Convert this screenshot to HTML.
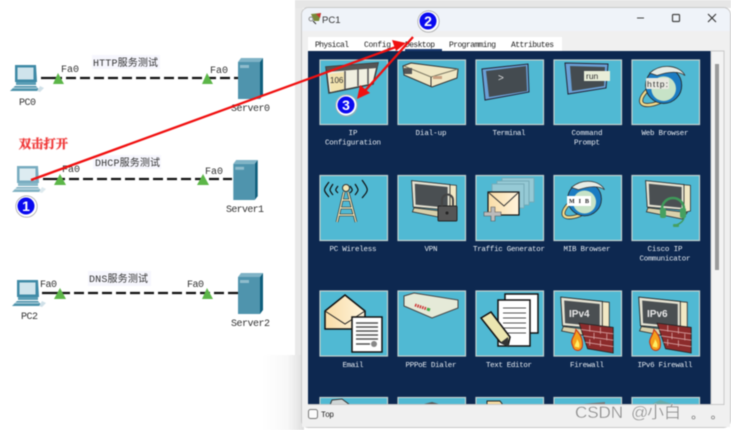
<!DOCTYPE html>
<html><head><meta charset="utf-8">
<style>
html,body{margin:0;padding:0;width:731px;height:430px;overflow:hidden;background:#fff}
svg{display:block;filter:blur(.45px)}
.m{font-family:"Liberation Mono","Noto Sans CJK SC",monospace;font-size:8px;fill:#222}
.l{font-family:"Liberation Mono",monospace;font-size:7.5px;fill:#e6ecf2;text-anchor:middle}
.n{font-family:"Liberation Mono","Noto Sans CJK SC",monospace;font-size:10px;fill:#333}
.c{font-family:"Liberation Sans",sans-serif;font-size:14px;font-weight:bold;fill:#fff;text-anchor:middle}
.w{font-family:"Liberation Sans","Noto Sans CJK SC",sans-serif;font-size:17px;fill:#8a8a8a;stroke:#fff;stroke-width:.25}
</style></head><body>
<svg width="731" height="430" viewBox="0 0 731 430" xmlns="http://www.w3.org/2000/svg">
<defs>
<linearGradient id="sh" x1="0" x2="1" y1="0" y2="0"><stop offset="0" stop-color="#fff"/><stop offset=".6" stop-color="#f8f8f8"/><stop offset="1" stop-color="#dedede"/></linearGradient>
<linearGradient id="env" x1="0" x2="1"><stop offset="0" stop-color="#f9dca6"/><stop offset="1" stop-color="#fff4dc"/></linearGradient>
<symbol id="pc" viewBox="0 0 36 30" overflow="visible">
<path d="M5 1H26L27 18H5Z" fill="#3f8aa6"/><rect x="7.500" y="3.500" width="16" height="12" fill="#cfe4ec"/>
<path d="M6 18H26V21H6Z" fill="#5a9db5"/><path d="M5 22H26L30 27H0Z" fill="#4e93ab"/><path d="M3 24H27" stroke="#bcd7e2"/>
<path d="M30 22L34 24L30 28L27 27Z" fill="#cfe0e8"/>
</symbol>
<symbol id="srv" viewBox="0 0 26 42" overflow="visible">
<path d="M3 0H25L22 4H0Z" fill="#7fb3c6"/><path d="M22 4L25 0V37L22 41Z" fill="#0f5f7d"/><rect x="0" y="4" width="22" height="37" fill="#4f94ad"/><rect x="2" y="7" width="9" height="3" fill="#8fbccc"/>
</symbol>
<symbol id="mon" viewBox="0 0 60 50" overflow="visible">
<path d="M48 7L58 8V40L48 42Z" fill="#f1e8c4" stroke="#333"/>
<path d="M5 36L3 41L48 50L54 42Z" fill="#d9d1ab" stroke="#333"/>
<path d="M2 2L50 7V39L4 35Z" fill="#e4e2d2" stroke="#222"/>
<path d="M6 6L47 10V36L7 32Z" fill="#4a4f52"/>
</symbol>
<symbol id="wall" viewBox="0 0 36 30" overflow="visible">
<path d="M4 2L36 6V30L12 26Z" fill="#8c2b2b" stroke="#222" stroke-width=".8"/><path d="M6 8L36 12M8 14L36 18M10 20L36 24" stroke="#d6a0a0" stroke-width=".8"/><path d="M14 4V10M24 6V12M18 11V17M30 12V18M14 17V23M24 18V24" stroke="#d6a0a0" stroke-width=".8"/>
<path d="M-2 23C-5 17 0 15 1 8C5 12 8 17 7 24C6 29-1 29-2 23Z" fill="#f4a01c" stroke="#c6341a"/><path d="M0 24C0 21 2 20 2 17C4 20 5 22 4 25Z" fill="#ffee66"/>
</symbol>
<symbol id="globe" viewBox="0 0 60 56" overflow="visible">
<path d="M12 32C2 42 2 50 12 50C20 50 30 46 38 40" fill="none" stroke="#333" stroke-width="5"/><path d="M12 32C2 42 2 50 12 50C20 50 30 46 38 40" fill="none" stroke="#efd98a" stroke-width="3"/>
<circle cx="32" cy="26" r="22" fill="#1b7cc2" stroke="#222"/><circle cx="32" cy="30" r="15" fill="#c7e3c7"/><path d="M15 11C30-2 52 2 58 14C50 8 36 10 24 14Z" fill="#e6ece6" stroke="#333"/>
</symbol>
</defs>

<rect width="731" height="430" fill="#fff"/>
<rect x="295" y="0" width="8" height="355" fill="#e9e9e9"/>
<rect x="262" y="355" width="42" height="75" fill="url(#sh)"/>
<rect x="295" y="0" width="436" height="8" fill="#e6e6e6"/>

<!-- Left topology -->
<rect x="92" y="55" width="68" height="14" fill="#f6f6fd"/><rect x="93" y="155" width="68" height="14" fill="#f6f6fd"/><rect x="88" y="271" width="63" height="15" fill="#f6f6fd"/>
<g stroke="#111" stroke-width="2.200" fill="none">
<path d="M41 78H52"/><path d="M52 78H238" stroke-dasharray="10 4"/>
<path d="M43 179H55"/><path d="M55 179H232" stroke-dasharray="10 4"/>
<path d="M42 293H60"/><path d="M60 293H238" stroke-dasharray="10 4"/>
</g>
<g fill="#5cb648">
<path d="M58 73L64 84H53Z"/><path d="M207 73L213 84H202Z"/>
<path d="M60 174L66 185H54Z"/><path d="M203 174L209 185H197Z"/>
<path d="M60 288L66 299H54Z"/><path d="M207 288L213 299H202Z"/>
</g>
<use href="#pc" x="10" y="64" width="36" height="30"/>
<g opacity=".7"><use href="#pc" x="12" y="165" width="36" height="30"/></g>
<use href="#pc" x="12" y="279" width="36" height="30"/>
<use href="#srv" x="238" y="58" width="26" height="42"/>
<use href="#srv" x="233" y="160" width="26" height="41"/>
<use href="#srv" x="238" y="273" width="26" height="42"/>

<g class="n">
<text x="61" y="72" class="n" textLength="18">Fa0</text><text x="210" y="73" class="n" textLength="18">Fa0</text>
<text x="62" y="172" class="n" textLength="18">Fa0</text><text x="205" y="174" class="n" textLength="18">Fa0</text>
<text x="40" y="287" class="n" textLength="17">Fa0</text><text x="187" y="287" class="n" textLength="17">Fa0</text>
<text x="19" y="105" class="n" textLength="17">PC0</text><text x="231" y="111" class="n" textLength="39">Server0</text>
<text x="226" y="212" class="n" textLength="38">Server1</text><text x="21" y="319" class="n" textLength="17">PC2</text><text x="231" y="326" class="n" textLength="39">Server2</text>
<text x="93" y="66" class="n" textLength="65">HTTP服务测试</text><text x="95" y="166" class="n" textLength="65">DHCP服务测试</text><text x="89" y="282" class="n" textLength="59">DNS服务测试</text>
</g>
<text x="19" y="148" font-family="'Noto Serif CJK SC','Noto Sans CJK SC',serif" font-size="12" font-weight="bold" fill="#f03030" stroke="#f6a8a8" stroke-width="1" paint-order="stroke" textLength="49">双击打开</text>

<!-- Window -->
<rect x="301.500" y="7.500" width="429" height="420" rx="7" fill="#f0f0f0" stroke="#c8c8c8"/>
<path d="M302 31V15a7 7 0 0 1 7-7H723a7 7 0 0 1 7 7V31Z" fill="#eff3f9"/>
<path d="M311 14L321 13L319 21L314 21Z" fill="#7a8a3a"/><path d="M316 14L321 13L320 18Z" fill="#c33"/><circle cx="311" cy="19" r="2" fill="none" stroke="#888"/><path d="M313 21L316 24" stroke="#333"/>
<text x="322" y="23" font-family="'Liberation Sans',sans-serif" font-size="9.500" fill="#333">PC1</text>
<path d="M637 18H644" stroke="#444" stroke-width="1"/><rect x="672.500" y="14.500" width="7" height="7" rx="1" fill="none" stroke="#444" stroke-width="1.200"/><path d="M708 14L716 22M716 14L708 22" stroke="#333" stroke-width="1.100"/>

<rect x="308" y="37" width="254" height="14" fill="#fff"/>
<rect x="405" y="49" width="37" height="2" fill="#1a3a70"/>
<g class="m">
<text x="315" y="47" textLength="34">Physical</text><text x="364" y="47" textLength="27">Config</text><text x="405" y="47" textLength="30">Desktop</text><text x="449" y="47" textLength="47">Programming</text><text x="511" y="47" textLength="43">Attributes</text>
</g>

<rect x="308" y="51" width="403" height="354" fill="#0d2850"/>
<rect x="711" y="51" width="13" height="354" fill="#f3f3f3" stroke="#c8c8c8"/>
<rect x="715" y="64" width="4" height="206" fill="#9a9a9a"/>

<!-- Tiles -->
<g fill="#50b9d3" stroke="#c4d2cf" stroke-width="1.200">
<rect x="320" y="60" width="67.500" height="64.500"/><rect x="398" y="60" width="67.500" height="64.500"/><rect x="476" y="60" width="67.500" height="64.500"/><rect x="554" y="60" width="67.500" height="64.500"/><rect x="632" y="60" width="67.500" height="64.500"/>
<rect x="320" y="175.500" width="67.500" height="65"/><rect x="398" y="175.500" width="67.500" height="65"/><rect x="476" y="175.500" width="67.500" height="65"/><rect x="554" y="175.500" width="67.500" height="65"/><rect x="632" y="175.500" width="67.500" height="65"/>
<rect x="320" y="291" width="67.500" height="65"/><rect x="398" y="291" width="67.500" height="65"/><rect x="476" y="291" width="67.500" height="65"/><rect x="554" y="291" width="67.500" height="65"/><rect x="632" y="291" width="67.500" height="65"/>
<rect x="320" y="397.500" width="67.500" height="8"/><rect x="398" y="397.500" width="67.500" height="8"/><rect x="476" y="397.500" width="67.500" height="8"/><rect x="554" y="397.500" width="67.500" height="8"/><rect x="632" y="397.500" width="67.500" height="8"/>
</g>

<!-- Row 1 icons -->
<path d="M326 67L378 63L373 84L329 93Z" fill="#f0efe0" stroke="#3a3a3a" stroke-width="1.500"/><path d="M326 67L378 63L377 68L327 72Z" fill="#555"/><path d="M329 74L344 72L344 89L331 92Z" fill="#f2e3ae"/><path d="M345 71V89M358 69V86M368 68V84" stroke="#555" stroke-width="1.500"/>
<text x="330" y="83" font-family="'Liberation Sans',sans-serif" font-size="8" fill="#333">106</text>
<path d="M403 66L411 63L458 69L457 78L432 87L404 75Z" fill="#f0e7c4" stroke="#333"/><path d="M404 66L431 77L458 69" fill="none" stroke="#7a7560"/><path d="M431 77V87" stroke="#333"/><rect x="404" y="68" width="8" height="6" fill="#555"/><rect x="433" y="76" width="9" height="3" fill="#c9a080"/>
<path d="M482 69L528 64L529 92L485 100Z" fill="#6aa0d6" stroke="#223"/><path d="M486 71L526 66L527 91L489 97Z" fill="#444b50"/><text x="498" y="81" font-family="'Liberation Sans',sans-serif" font-size="10" fill="#ddd">&gt;</text>
<path d="M565 63L608 64L606 88L568 94Z" fill="#6aa0d6" stroke="#223"/><path d="M570 66L605 67L604 86L572 91Z" fill="#444b50"/><rect x="584" y="71" width="26" height="10" fill="#e8edd8"/><text x="586" y="79" font-family="'Liberation Sans',sans-serif" font-size="8.500" fill="#333">run</text>
<use href="#globe" x="636" y="64" width="52" height="46"/><rect x="646" y="78" width="23" height="11" rx="1" fill="#e8e8e0"/><text x="647" y="87" font-family="'Liberation Sans',sans-serif" font-size="8.500" fill="#333" textLength="21">http:</text>

<!-- Row 2 icons -->
<g fill="none" stroke="#111" stroke-width="1.200"><path d="M329 182C323 190 323 190 329 197"/><path d="M333 184C329 190 329 190 333 195"/><path d="M338 186C335 190 335 190 338 193"/><path d="M350 186C353 190 353 190 350 193"/><path d="M355 184C359 190 359 190 355 195"/><path d="M362 180C369 190 369 190 362 198"/></g>
<circle cx="346" cy="188" r="3.500" fill="#f3e7b5" stroke="#333"/><path d="M344 192L337 222M348 192L356 222M342 200H350M340 208H352M339 215H354" stroke="#333" stroke-width="2.600" fill="none"/><path d="M344 192L337 222M348 192L356 222M342 200H350M340 208H352M339 215H354" stroke="#f6ecbd" stroke-width="1.200" fill="none"/>
<use href="#mon" x="410" y="179" width="48" height="40"/><rect x="438" y="206" width="19" height="15" rx="1" fill="#555" stroke="#222"/><path d="M442 206V200a5 5 0 0 1 11 0V206" fill="none" stroke="#444" stroke-width="2"/><circle cx="447" cy="213" r="1.500" fill="#222"/>
<g fill="#a8cfd6" stroke="#7fa7b0" opacity=".8"><rect x="502" y="178" width="32" height="24"/><rect x="497" y="181" width="32" height="24"/><rect x="492" y="184" width="32" height="24"/></g>
<rect x="488" y="192" width="31" height="23" fill="url(#env)" stroke="#111" stroke-width="1.200"/><path d="M488 192L504 206L519 192" fill="none" stroke="#333"/>
<path d="M484 212H491V207H495V212H501V216H495V221H491V216H484Z" fill="#bbb" stroke="#555" stroke-width=".6"/>
<use href="#globe" x="558" y="179" width="50" height="43"/><rect x="567" y="196" width="24" height="10" fill="#fff"/><text x="569" y="203" font-family="'Liberation Serif',serif" font-size="6" font-weight="bold" fill="#222" textLength="20">MIB</text>
<use href="#mon" x="644" y="179" width="48" height="40"/><path d="M662 209a11 11 0 0 1 22 0" fill="none" stroke="#3f9a5a" stroke-width="2.500"/><rect x="660" y="208" width="6" height="10" rx="2" fill="#46a060"/><rect x="680" y="208" width="6" height="10" rx="2" fill="#46a060"/><path d="M684 218C683 222 678 225 675 225" fill="none" stroke="#3f9a5a" stroke-width="1.500"/><rect x="673" y="224" width="6" height="3" rx="1" fill="#46a060"/>

<!-- Row 3 icons -->
<path d="M325 311L345 295L365 311V329H325Z" fill="url(#env)" stroke="#111" stroke-width="1.500"/><path d="M325 311L345 324L365 311" fill="none" stroke="#222"/>
<rect x="352" y="317" width="30" height="35" fill="#fff" stroke="#111" stroke-width="1.500"/><path d="M356 323H378M356 327H378M356 331H378M356 335H378M356 339H378M356 344H370" stroke="#555" stroke-width="1.500"/><circle cx="374" cy="344" r="3" fill="#888"/>
<path d="M404 296L414 293L458 300V308L432 318L404 306Z" fill="#e5ead8" stroke="#444"/><path d="M415 305L427 309" stroke="#c33" stroke-width="3" stroke-dasharray="1.500 1"/><path d="M427 309L430 310" stroke="#4a4" stroke-width="3"/>
<rect x="505" y="294" width="33" height="39" fill="#fff" stroke="#111" stroke-width="1.500"/>
<rect x="498" y="300" width="32" height="46" fill="#fff" stroke="#111" stroke-width="1.500"/><path d="M503 308H526M503 313H526M503 318H526M503 323H526M503 328H526M503 333H526" stroke="#555"/>
<path d="M481 318L491 312L510 337L508 346L500 342Z" fill="#ece6b0" stroke="#111" stroke-width="1.500"/><path d="M500 343L508 337L509 347Z" fill="#333"/>
<use href="#mon" x="559" y="295" width="52" height="44"/><text x="569" y="317" font-family="'Liberation Sans',sans-serif" font-size="10" font-weight="bold" fill="#e8e8e8">IPv4</text><use href="#wall" x="574" y="321" width="40" height="32"/>
<use href="#mon" x="637" y="295" width="52" height="44"/><text x="647" y="317" font-family="'Liberation Sans',sans-serif" font-size="10" font-weight="bold" fill="#e8e8e8">IPv6</text><use href="#wall" x="652" y="321" width="40" height="32"/>

<!-- Row 4 hints -->
<path d="M330 405L332 400L342 399L350 405Z" fill="#cfd6d6" stroke="#333"/><path d="M420 405L432 402L442 405Z" fill="#555"/><path d="M487 405V401H500L503 405Z" fill="#f4d9a0" stroke="#222"/><path d="M572 405L605 402V405Z" fill="#777"/><path d="M650 405L660 400L675 405Z" fill="#6aa"/>

<!-- Labels -->
<g>
<text class="l" x="353" y="135">IP</text><text class="l" x="353" y="144.500" textLength="56">Configuration</text>
<text class="l" x="431" y="135" textLength="31">Dial-up</text><text class="l" x="509" y="135" textLength="33">Terminal</text>
<text class="l" x="587" y="135" textLength="31">Command</text><text class="l" x="587" y="144.500" textLength="26">Prompt</text><text class="l" x="665" y="135" textLength="47">Web Browser</text>
<text class="l" x="353" y="251" textLength="47">PC Wireless</text><text class="l" x="431" y="251" textLength="13">VPN</text><text class="l" x="509" y="251" textLength="72">Traffic Generator</text><text class="l" x="587" y="251" textLength="47">MIB Browser</text>
<text class="l" x="665" y="251" textLength="35">Cisco IP</text><text class="l" x="665" y="260.500" textLength="51">Communicator</text>
<text class="l" x="353" y="367" textLength="21">Email</text><text class="l" x="431" y="367" textLength="51">PPPoE Dialer</text><text class="l" x="509" y="367" textLength="46">Text Editor</text><text class="l" x="587" y="367" textLength="34">Firewall</text><text class="l" x="665" y="367" textLength="55">IPv6 Firewall</text>
</g>

<!-- Bottom bar -->
<rect x="302" y="405" width="428" height="22" fill="#f0f0f0"/>
<path d="M308 404.500H724" stroke="#c8c8c8"/>
<rect x="308.500" y="409.500" width="9" height="9" rx="2" fill="#fbfbfb" stroke="#777"/>
<text x="321" y="417" class="m" textLength="13">Top</text>
<text x="575" y="418" class="w" textLength="48">CSDN</text><text x="631" y="418" class="w">@</text><text x="647" y="418" class="w">小白</text>
<circle cx="693.500" cy="417.500" r="1.500" fill="none" stroke="#888" stroke-width=".8"/><circle cx="713" cy="417.500" r="1.500" fill="none" stroke="#888" stroke-width=".8"/>

<!-- Red arrows -->
<g fill="none" stroke="#f01010" stroke-width="2.300"><path d="M31 180L396 47"/><path d="M413 37L363 93"/></g>
<path d="M406 43L392 40L396 51Z" fill="#f01010"/><path d="M357 99L360 85L370 93Z" fill="#f01010"/>

<!-- Badges -->
<g stroke="#fff" stroke-width="2" fill="#0a0af0">
<circle cx="26" cy="206" r="9.500"/><circle cx="428" cy="21" r="9.500"/><circle cx="346" cy="105" r="9.500"/>
</g>
<g fill="none" stroke="#aaa" stroke-width=".8"><circle cx="26.500" cy="206.500" r="10.700"/><circle cx="428.500" cy="21.500" r="10.700"/><circle cx="346.500" cy="105.500" r="10.700"/></g>
<text class="c" x="26" y="211">1</text><text class="c" x="428" y="26">2</text><text class="c" x="346" y="110">3</text>
</svg>
</body></html>
